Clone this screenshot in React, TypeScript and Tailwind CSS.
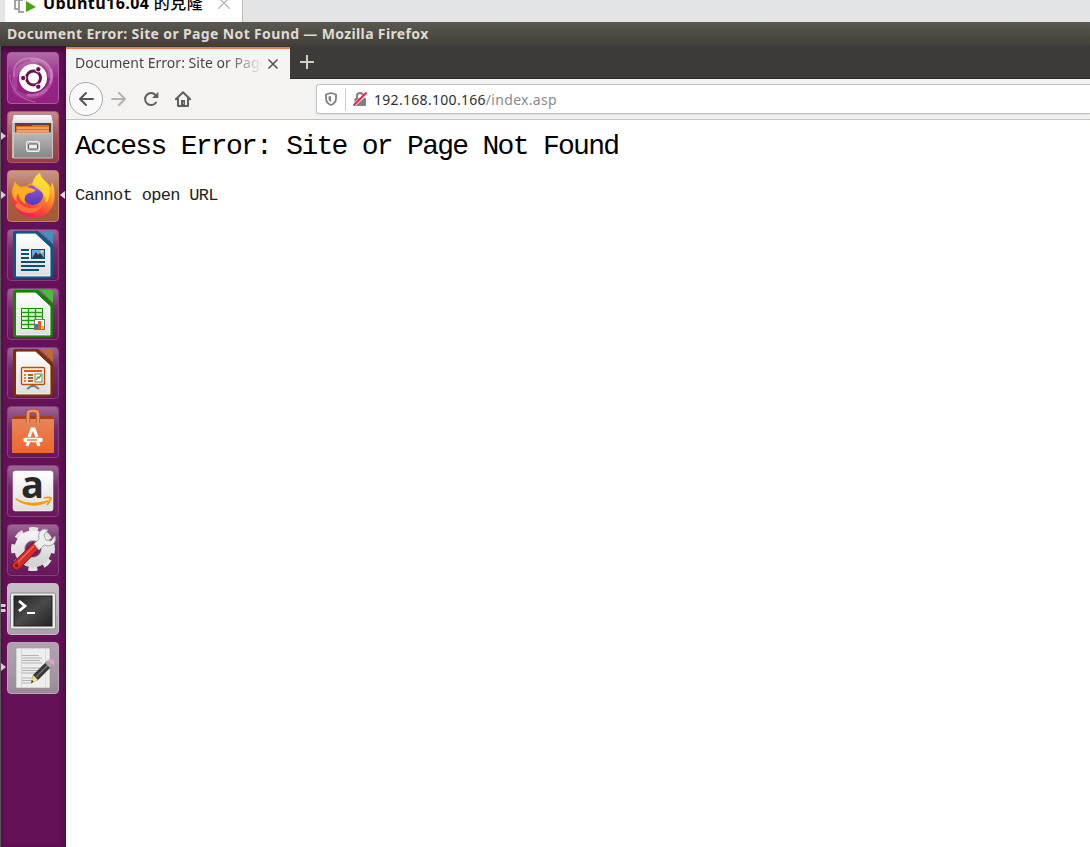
import type { ReactNode } from "react";

type Tile = { name: string; tone: string; art: ReactNode; left?: "one" | "two"; active?: boolean };

const clear = "from-[#9d6695] via-[#732c69] via-40% to-[#69155b] border-[#834179]";

function OfficePage({ c, c2, children }: { c: string; c2: string; children: ReactNode }) {
  return (
    <>
      <path d="M8 2h23l15 14v31a2.5 2.5 0 0 1-2.5 2.5h-35A2.5 2.5 0 0 1 6 47V4.500a2.500 2.500 0 0 1 2-2.500z" fill={c} />
      <path d="M33.500 2H44a2 2 0 0 1 2 2v11z" fill={c2} />
      <path d="M9.500 5h19L43 18.500V47H9.500z" fill="url(#paper)" stroke="#fff" strokeWidth=".8" />
      <path d="M28.500 5L43 18.500l-5-3z" fill="#fff" />
      {children}
    </>
  );
}

const tiles: Tile[] = [
  {
    name: "Dash",
    tone: "from-[#b06aa6] via-[#982486] to-[#942180] border-[#a85ca0]",
    art: (
      <>
        <g fill="none" stroke="#e7b9df" strokeLinecap="round">
          <path d="M7 24C5 10 17 4 30 7s18 14 13 24" strokeWidth="2" opacity=".35" />
          <path d="M8 35C5 20 15 11 28 11" strokeWidth="5" opacity=".2" />
          <path d="M44 18c4 15-7 27-23 25" strokeWidth="3" opacity=".32" />
          <path d="M8 39c8 8 21 8 30 0" strokeWidth="5" opacity=".16" />
          <path d="M3 23C2 37 14 48 28 50" strokeWidth="1" opacity=".4" />
          <path d="M25 8c11-1 19 7 18 17" strokeWidth="4" opacity=".26" />
        </g>
        <circle cx="26" cy="27" r="14.200" fill="#5b164f" opacity=".4" />
        <circle cx="26" cy="26" r="14" fill="#fff" />
        <circle cx="26.500" cy="26" r="7" fill="none" stroke="#681351" strokeWidth="3" />
        <g fill="#681351" stroke="#fff" strokeWidth="1">
          <circle cx="16.200" cy="26" r="2.700" /><circle cx="31.300" cy="17.300" r="2.700" /><circle cx="31.300" cy="34.700" r="2.700" />
        </g>
      </>
    ),
  },
  {
    name: "Files",
    tone: "from-[#c78890] via-[#a45151] to-[#963d45] border-[#a75d63]",
    left: "one",
    art: (
      <>
        <path d="M7 4h37l2 9v34H5V13z" fill="#bdbdbd" />
        <path d="M7 4h37l2 8H5z" fill="url(#paper)" />
        <path d="M8 12h36v11H8z" fill="#54463f" />
        <path d="M9 15h15l2-1h16v9H9z" fill="#e86b20" />
        <path d="M10 17h32M10 20h32" stroke="#ffd5a0" />
        <path d="M6.500 22h39v25h-39z" fill="url(#steel)" stroke="#c7c7c7" />
        <rect x="19.500" y="30.500" width="13" height="10" rx="1.500" fill="#c5c5c5" stroke="#eee" />
        <rect x="21.500" y="33" width="9" height="5" rx="1" fill="#eee" stroke="#555" />
      </>
    ),
  },
  {
    name: "Firefox",
    tone: "from-[#cb968b] via-[#a86242] to-[#a55837] border-[#bd8068]",
    left: "one",
    active: true,
    art: (
      <>
        <path d="M8 11c1 3 3 5 6 6 2-1 4-1 6-1 1-2 4-3 6-3 1-5 3-8 7-10 1 6 7 8 11 14l1-5c4 8 4 21-2 28-7 9-21 10-30 3S2 25 6 17z" fill="url(#fox)" />
        <circle cx="26" cy="25" r="10" fill="url(#globe)" />
        <path d="M8 12c2 3 5 5 8 5 5-1 9 2 13 3-2 2-4 3-7 3-2 1-4 2-4 4-1 3 0 5 1 7-5-2-7-7-8-11-2 3-2 6-1 9-6-5-6-12-2-20z" fill="#ffad25" />
        <path d="M33 3c0 6 7 8 9 15 1 5 1 10-3 15 0-7-4-12-10-15-1-1-2-2-4-3 1-5 3-9 8-12z" fill="#ffe234" opacity=".8" />
        <path d="M11 31c5 8 17 10 25 2-2 11-19 14-28 3z" fill="#ff7139" />
      </>
    ),
  },
  {
    name: "Writer", tone: clear,
    art: (
      <OfficePage c="#075b82" c2="#3f94be">
        <path d="M14 21h8M14 25h8M14 29h8M14 33h24M14 37h24M14 41h18" stroke="#075174" strokeWidth="2" />
        <rect x="24.500" y="20.500" width="13" height="9" fill="#62aae2" stroke="#075174" />
        <path d="M25 29l4-6 2 3 2-2 4 5z" fill="#333" /><circle cx="35" cy="22.500" r="1.500" fill="#ffd75e" />
      </OfficePage>
    ),
  },
  {
    name: "Calc", tone: clear,
    art: (
      <OfficePage c="#168106" c2="#45c236">
        <path d="M14.500 20.500h21v20h-21z" fill="#e0ffd8" stroke="#168106" />
        <path d="M14 24.500h22M14 28.500h22M14 32.500h22M14 36.500h22M21.500 20v21M28.500 20v21" stroke="#239c10" strokeWidth="1.400" />
        <rect x="27.500" y="31.500" width="10" height="10" fill="#fff" stroke="#777" />
        <path d="M28 36h3v5h-3z" fill="#1689d8" /><path d="M31 33h3v8h-3z" fill="#ee5b13" /><path d="M34.500 38h2.500v3h-2.500z" fill="#e9bd17" />
      </OfficePage>
    ),
  },
  {
    name: "Impress", tone: clear,
    art: (
      <OfficePage c="#7c3000" c2="#bb6a38">
        <path d="M26 37v3M26 38l-6 4M26 38l6 4" stroke="#777" strokeWidth="2" />
        <rect x="14.500" y="20.500" width="23" height="17" rx="1" fill="#fff3e8" stroke="#ba4e0c" strokeWidth="1.400" />
        <path d="M17 24h18" stroke="#d45b18" strokeWidth="2" />
        <path d="M17 28h2m-2 3h2m-2 3h2" stroke="#d45b18" strokeWidth="1.500" />
        <path d="M21 28h5m-5 3h5m-5 3h5" stroke="#843306" strokeWidth="1.700" />
        <rect x="28" y="27" width="7" height="8" fill="#fff" stroke="#777" /><path d="M29 33l2-3 1 1 2-3" fill="none" stroke="#38a431" strokeWidth="1.300" />
      </OfficePage>
    ),
  },
  {
    name: "Software", tone: clear,
    art: (
      <>
        <path d="M5 14l2-4h38l2 4z" fill="#a63f13" />
        <path d="M5 13h42v34H5z" fill="url(#bag)" />
        <path d="M21 17V8q0-3 3-3h4q3 0 3 3v9" fill="none" stroke="#b4522f" strokeWidth="4.200" />
        <path d="M21 17V8q0-3 3-3h4q3 0 3 3v9" fill="none" stroke="#ed9468" strokeWidth="2.600" />
        <path d="M20 40l1.500-4M32 40l-1.500-4M22 31l3-8h2l3 8" fill="none" stroke="#fff" strokeWidth="3.200" />
        <path d="M18.500 34h15" stroke="#fff" strokeWidth="4.600" strokeLinecap="round" /><path d="M20 34h10" stroke="#e75d2a" strokeWidth="1.200" />
      </>
    ),
  },
  {
    name: "Amazon", tone: clear,
    art: (
      <>
        <rect x="6" y="6" width="40" height="40" rx="2.500" fill="url(#paper)" stroke="#fff" strokeWidth=".5" />
        <text x="25.500" y="33" textAnchor="middle" fontFamily="Open Sans, sans-serif" fontWeight="700" fontSize="38" fill="#292929">a</text>
        <path d="M8 34c10 8 24 9 34 2l-1-1c-11 4-23 4-32-2z" fill="#ff9800" />
        <path d="M37 33c3-1 4-1 7 0-1 3-2 5-4 7" fill="none" stroke="#ff9800" strokeWidth="1.800" />
      </>
    ),
  },
  {
    name: "Settings", tone: clear,
    art: (
      <>
        <circle cx="26" cy="25" r="19.500" fill="none" stroke="#e3e3e3" strokeWidth="5" strokeDasharray="8.700 6.620" transform="rotate(-13 26 25)" />
        <circle cx="26" cy="25" r="13.500" fill="none" stroke="url(#gear)" strokeWidth="10" />
        <circle cx="26" cy="25" r="8.500" fill="none" stroke="#bcbcbc" />
        <path d="M9.500 41.500L28 23" stroke="#830e0e" strokeWidth="9" strokeLinecap="round" />
        <path d="M9.500 41.500L28 23" stroke="#d12d29" strokeWidth="7.500" strokeLinecap="round" />
        <path d="M11 38L27 22" stroke="#f26861" strokeWidth="1.500" />
        <path d="M27 20l5-5q-2-8 5-10l4 1-4 5 2 5 5 1 4-5q2 9-7 10l-4-1-5 5z" fill="#eee" stroke="#a4a4a4" />
        <circle cx="9.500" cy="41.500" r="1.500" fill="#6d1c18" />
      </>
    ),
  },
  {
    name: "Terminal", tone: "from-[#c9bfc8] via-[#bdb3bc] to-[#aaa0aa] border-[#c5bbc4]", left: "two",
    art: (
      <>
        <rect x="3.500" y="10" width="45" height="36" rx="1.500" fill="#ececec" stroke="#898989" />
        <rect x="7" y="13" width="38" height="30" fill="url(#screen)" stroke="#222" />
        <path d="M12 18l6 5-6 5" fill="none" stroke="#fff" strokeWidth="2.800" /><path d="M20 30h8" stroke="#fff" strokeWidth="2" />
      </>
    ),
  },
  {
    name: "Editor", tone: "from-[#b2a2b1] via-[#a999a7] to-[#9a8a98] border-[#b5a7b3]", left: "one",
    art: (
      <>
        <path d="M9 6h34v40H9z" fill="#eee" stroke="#999" strokeWidth=".6" />
        <path d="M14.500 6v40" stroke="#f2c0c0" strokeWidth=".7" /><path d="M38.500 6v40" stroke="#c5d9ef" strokeWidth=".7" />
        <path d="M15 13.500h17M15 16h20M15 18.500h18M15 21h20M15 26h18M15 28.500h20M15 31h15M15 36h14M15 38.500h13M15 41h10" stroke="#aaa" strokeWidth=".9" />
        <path d="M24 41l2-8 14-14 5 5-14 14z" fill="#363636" />
        <path d="M29 35l13-13" stroke="#777" strokeWidth="1.300" />
        <path d="M24 41l2-8 5 5z" fill="#eee27c" /><path d="M24 41l1-3 1.500 2z" fill="#222" />
        <path d="M38 21l3-3 5 5-3 3z" fill="#aaa" /><path d="M41 18l2-1q5 0 4 5l-1 1z" fill="#ee9bca" />
      </>
    ),
  },
];

function Defs() {
  return (
    <svg className="absolute size-0" aria-hidden="true">
      <defs>
        <linearGradient id="paper" x2="0" y2="1"><stop stopColor="#fff" /><stop offset="1" stopColor="#dedede" /></linearGradient>
        <linearGradient id="steel" x2="0" y2="1"><stop stopColor="#b9b9b9" /><stop offset="1" stopColor="#858585" /></linearGradient>
        <linearGradient id="bag" x2="0" y2="1"><stop stopColor="#e5855a" /><stop offset="1" stopColor="#ee682d" /></linearGradient>
        <linearGradient id="fox" x1=".8" x2=".3" y2="1"><stop stopColor="#ffe63b" /><stop offset=".45" stopColor="#ff8c27" /><stop offset=".75" stopColor="#ff403b" /><stop offset="1" stopColor="#ef146b" /></linearGradient>
        <linearGradient id="globe" x2="0" y2="1"><stop stopColor="#a850d8" /><stop offset="1" stopColor="#493dba" /></linearGradient>
        <linearGradient id="gear" x2="0" y2="1"><stop stopColor="#f2f2f2" /><stop offset="1" stopColor="#d4d4d4" /></linearGradient>
        <linearGradient id="screen" x2="1" y2="1"><stop stopColor="#222" /><stop offset=".5" stopColor="#4a4a4a" /><stop offset="1" stopColor="#222" /></linearGradient>
      </defs>
    </svg>
  );
}

function Launcher() {
  return (
    <aside className="flex w-[66px] shrink-0 flex-col gap-[7px] border-l border-[#5c5559] bg-[#651158] pt-1.5 pl-1.5 shadow-[inset_0_5px_5px_#430c3a,inset_-3px_0_4px_#5a0e4e]">
      {tiles.map((tile) => (
        <div key={tile.name} className="relative size-[52px] shrink-0">
          <div className={`absolute inset-0 rounded-[4px] border bg-gradient-to-b ${tile.tone}`} />
          <svg viewBox="0 0 52 52" className="absolute inset-0 size-[52px]">{tile.art}</svg>
          {tile.left === "one" && <svg className="absolute top-[21px] -left-[6px] h-2 w-[5px]" viewBox="0 0 5 8"><path d="M0 0l5 4-5 4z" fill="#d8cbd5" /></svg>}
          {tile.left === "two" && <svg className="absolute top-[21px] -left-[6px] h-2 w-[5px]" viewBox="0 0 5 8"><path d="M0 0h4l1 1.500L4 3H0zM0 5h4l1 1.500L4 8H0z" fill="#d8cbd5" /></svg>}
          {tile.active && <svg className="absolute top-[21px] -right-[6px] h-2 w-[5px]" viewBox="0 0 5 8"><path d="M5 0L0 4l5 4z" fill="#e4dae1" /></svg>}
        </div>
      ))}
    </aside>
  );
}

function Browser() {
  return (
    <div className="flex min-w-0 flex-1 flex-col bg-white">
      <div className="flex h-[33px] shrink-0 border-b border-[#2b2a27] bg-[#3c3b37]">
        <div className="mt-px -mb-px flex h-8 w-[224px] items-center border-t-2 border-[#f27b50] bg-[#f5f4f3] pl-[9px]">
          <span className="-mt-[3px] w-[188px] overflow-hidden whitespace-nowrap bg-gradient-to-r from-[#414141] from-80% to-transparent bg-clip-text text-[14px] tracking-[0.03px] text-transparent">Document Error: Site or Page Not Found</span>
          <svg className="-mt-px ml-[4px] size-3 shrink-0" viewBox="0 0 12 12"><path d="M1.500 1.500l9 9m0-9l-9 9" stroke="#555" strokeWidth="1.600" /></svg>
        </div>
        <svg className="mt-[9px] ml-[10px] size-[14px]" viewBox="0 0 14 14"><path d="M7 0v14M0 7h14" stroke="#d0cfca" strokeWidth="2" /></svg>
      </div>
      <div className="flex h-[41px] shrink-0 items-center border-b border-[#c5c3c1] bg-[#f4f3f1] pl-[3px]">
        <button className="flex size-[34px] items-center justify-center rounded-full border border-[#aaa] bg-[#fafafa]" aria-label="Back">
          <svg className="size-4" viewBox="0 0 16 16"><path d="M15 8H2m6-6L2 8l6 6" fill="none" stroke="#555" strokeWidth="2" strokeLinecap="round" strokeLinejoin="round" /></svg>
        </button>
        <svg className="ml-2 size-4" viewBox="0 0 16 16"><path d="M1 8h13M8 2l6 6-6 6" fill="none" stroke="#b4b3b1" strokeWidth="2" strokeLinecap="round" strokeLinejoin="round" /></svg>
        <svg className="ml-4 size-4" viewBox="0 0 16 16"><path d="M13 11.500A6 6 0 1 1 12.500 4" fill="none" stroke="#606060" strokeWidth="2" strokeLinecap="round" /><path d="M15.400.8v6.300H9z" fill="#606060" /></svg>
        <svg className="ml-4 size-4" viewBox="0 0 16 16"><path d="M.8 8.300L8 1.200l7.200 7.100M3 7.500V15h10V7.500" fill="none" stroke="#606060" strokeWidth="2" strokeLinecap="round" strokeLinejoin="round" /><path d="M6 15V9h4v6z" fill="#606060" /><path d="M8.500 11.500v1" stroke="#eee" /></svg>
        <div className="ml-[125px] flex h-[30px] min-w-0 flex-1 items-center rounded-l-[3px] border border-r-0 border-[#c5c4c3] bg-white pl-[7px] shadow-[0_1px_2px_#ddd]">
          <svg className="size-[14px] shrink-0" viewBox="0 0 14 14"><path d="M7 1l5 1.500v4C12 10 9.500 12 7 13 4.500 12 2 10 2 6.500v-4z" fill="none" stroke="#808080" strokeWidth="1.800" strokeLinejoin="round" /><path d="M7 4v6C5 9 4.500 8 4.500 6V4.500z" fill="#808080" /></svg>
          <span className="ml-[7px] h-[22px] w-px bg-[#ccc]" />
          <svg className="ml-[7px] size-[14px] shrink-0" viewBox="0 0 14 14"><path d="M4 6V4a3 3 0 0 1 6 0v2" fill="none" stroke="#808080" strokeWidth="2" /><rect x="1.500" y="6" width="11.500" height="8" rx="1" fill="#808080" /><path d="M0 14L14 1" stroke="#fff" strokeWidth="3.200" /><path d="M.5 13.500l13-13" stroke="#ff164a" strokeWidth="2" /></svg>
          <span className="ml-[7px] whitespace-nowrap text-[14px] tracking-[0.3px] text-[#303030]">192.168.100.166<span className="text-[#8b8b8b]">/index.asp</span></span>
        </div>
      </div>
      <main className="flex flex-1 flex-col overflow-hidden bg-white pl-[9px] font-['Liberation_Mono',monospace] text-black">
        <h1 className="mt-[11px] h-8 whitespace-nowrap text-[28px] leading-8 tracking-[-1.710px]">Access Error: Site or Page Not Found</h1>
        <p className="mt-[23px] h-5 whitespace-nowrap text-[17px] leading-5 tracking-[-0.680px] text-[#222]">Cannot open URL</p>
      </main>
    </div>
  );
}

export default function App() {
  return (
    <div className="flex h-[847px] w-[1090px] flex-col overflow-hidden bg-white font-['Noto_Sans',sans-serif]">
      <Defs />
      <header className="flex h-[22px] shrink-0 bg-[#e4e5e7] pl-[5px]">
        <div className="flex h-[22px] w-[238px] overflow-hidden border-r border-[#bbb] bg-white pl-[9px]">
          <svg className="h-[14px] w-6 shrink-0" viewBox="0 0 24 14"><path d="M4 0H1v9h3m5-9H5v12h5" fill="none" stroke="#888" strokeWidth="1.500" /><path d="M12 1l10 6-10 5z" fill="#43a417" /></svg>
          <span className="-mt-[7px] ml-[5px] h-5 w-[169px] whitespace-nowrap font-['Open_Sans','Noto_Sans_CJK_TC',sans-serif] text-[16px] leading-5 font-bold tracking-[0.400px] text-black">Ubuntu16.04 <span className="font-medium">的克隆</span></span>
          <svg className="-mt-[3px] ml-[6px] size-3 shrink-0" viewBox="0 0 12 12"><path d="M0 0l12 12M12 0L0 12" stroke="#bdbdbd" strokeWidth="1.500" /></svg>
        </div>
      </header>
      <div className="flex h-6 shrink-0 items-center bg-gradient-to-b from-[#5b594f] to-[#403f39] pb-0.5 pl-[7px] text-[14px] font-bold tracking-[0.360px] whitespace-nowrap text-[#dfdbd2]">
        Document Error: Site or Page Not Found — Mozilla Firefox
      </div>
      <div className="flex min-h-0 flex-1"><Launcher /><Browser /></div>
    </div>
  );
}
